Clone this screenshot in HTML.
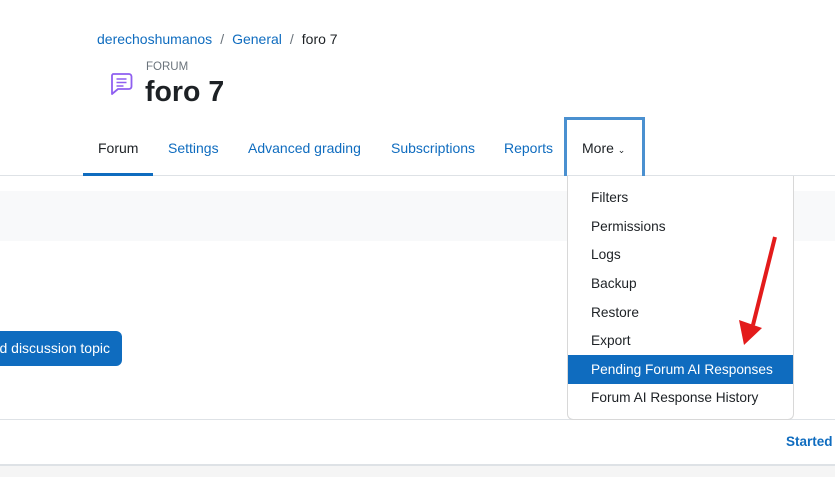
<html><head><style>
body{margin:0;width:835px;height:477px;overflow:hidden;background:#fff;font-family:"Liberation Sans",sans-serif;position:relative;color:#1d2125}
.a{position:absolute}
a{color:#0f6cbf;text-decoration:none}
.tab{position:absolute;top:140px;font-size:14px;color:#0f6cbf}
.dd div{position:absolute;left:23px;font-size:13.7px;color:#1d2125}
</style></head><body>
<div class="a" style="left:97px;top:31px;font-size:14px"><a>derechoshumanos</a><span style="color:#6a737b;margin:0 8px">/</span><a>General</a><span style="color:#6a737b;margin:0 8px">/</span>foro 7</div>
<svg class="a" style="left:108px;top:72px" width="26" height="26" viewBox="0 0 26 26"><path d="M5 2h16a2.5 2.5 0 0 1 2.5 2.5v10A2.5 2.5 0 0 1 21 17H10l-6 5V4.5A2.5 2.5 0 0 1 5 2z" fill="none" stroke="#8f5ff0" stroke-width="1.8" stroke-linejoin="round"/><path d="M8.5 7h10M8.5 10.5h10M8.5 14h7" stroke="#8f5ff0" stroke-width="1.6"/></svg>
<div class="a" style="left:146px;top:61px;font-size:11.5px;color:#6a737b">FORUM</div>
<div class="a" style="left:145px;top:76px;font-size:28.5px;font-weight:bold">foro 7</div>
<div class="tab" style="left:98px;color:#1d2125">Forum</div>
<div class="tab" style="left:168px">Settings</div>
<div class="tab" style="left:248px">Advanced grading</div>
<div class="tab" style="left:391px">Subscriptions</div>
<div class="tab" style="left:504px">Reports</div>
<div class="tab" style="left:582px;color:#1d2125">More <span style="font-size:9px">&#8964;</span></div>
<div class="a" style="left:0;top:175px;width:835px;height:1px;background:#dee2e6"></div>
<div class="a" style="left:83px;top:173px;width:70px;height:3px;background:#0f6cbf"></div>
<div class="a" style="left:564px;top:117px;width:75px;height:56px;border:3px solid #4a90d0;border-bottom:none"></div>
<div class="a" style="left:0;top:191px;width:835px;height:50px;background:#f8f9fa"></div>
<div class="a" style="left:-10px;top:331px;width:132px;height:35px;background:#0f6cbf;border-radius:6px;color:#fff;font-size:14px;line-height:35px;text-align:right;box-sizing:border-box;padding-right:12px">d discussion topic</div>
<div class="a" style="left:0;top:419px;width:835px;height:1px;background:#dee2e6"></div>
<div class="a" style="left:786px;top:434px;font-size:13.5px;font-weight:bold;color:#0f6cbf">Started</div>
<div class="a" style="left:0;top:464px;width:835px;height:2px;background:#dee2e6"></div>
<div class="a" style="left:0;top:466px;width:835px;height:11px;background:#f5f5f5"></div>
<div class="a dd" style="left:567px;top:176px;width:225px;height:243px;background:#fff;border:1px solid #d8d8d8;border-top:none;border-radius:0 0 6px 6px">
<div style="top:14px">Filters</div>
<div style="top:43px">Permissions</div>
<div style="top:71px">Logs</div>
<div style="top:100px">Backup</div>
<div style="top:129px">Restore</div>
<div style="top:157px">Export</div>
<div style="left:0;top:179px;width:225px;height:29px;background:#0f6cbf"></div>
<div style="top:186px;color:#fff">Pending Forum AI Responses</div>
<div style="top:214px">Forum AI Response History</div>
</div>
<svg class="a" style="left:0;top:0" width="835" height="477"><line x1="775" y1="237" x2="753" y2="325" stroke="#e31b1b" stroke-width="4"/><polygon points="739,320 762,328 744,345" fill="#e31b1b"/></svg>
</body></html>
